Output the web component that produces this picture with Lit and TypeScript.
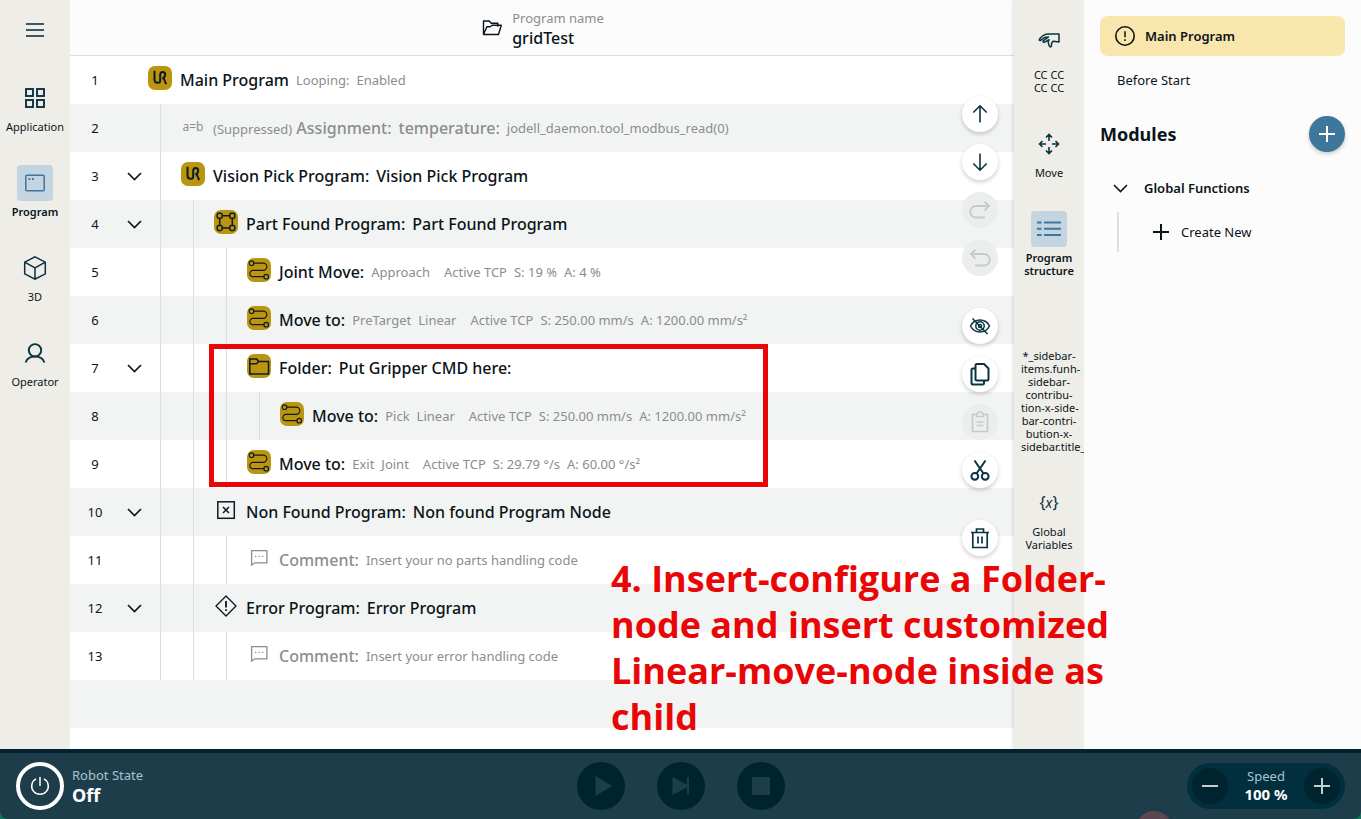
import { LitElement, html, svg, css, nothing } from "lit";
import { customElement, property } from "lit/decorators.js";
import { classMap } from "lit/directives/class-map.js";

const icons: Record<string, unknown> = {
  menu: svg`<path stroke-width="1.9" d="M3 6h18M3 12h18M3 18h18"/>`,
  apps: svg`<g stroke-width="1.9"><rect x="3" y="3" width="7" height="7"/><rect x="14" y="3" width="7" height="7"/><rect x="3" y="14" width="7" height="7"/><rect x="14" y="14" width="7" height="7"/></g>`,
  window: svg`<rect x="2.8" y="4.200" width="18.400" height="15.600" rx="1" stroke-width="1.500"/><path d="M5.500 8h1.800M9 8h1.800" stroke-width="1.800"/>`,
  cube: svg`<path stroke-width="1.500" d="M12 .8l10.300 5.400v11.600L12 23.200 1.700 17.800V6.200zM1.700 6.200L12 12l10.300-5.800M12 12v11.200"/>`,
  person: svg`<g stroke-width="1.900"><circle cx="12" cy="9.300" r="6.200"/><path d="M2.600 21.500c1.200-3.800 5-6 9.400-6s8.200 2.200 9.400 6"/></g>`,
  hand: svg`<path stroke-width="1.500" stroke-linejoin="round" d="M22 6H11.500C8 6 4.500 8.300 2.400 11.300c-.5.9.6 1.700 1.600.9L7.500 9.500l4-.5-5 3.600c-1.100.9.1 2.200 1.300 1.500l4.200-2.400c-1.300 1.800-1 3.300-.2 5l.7 1.600c.5 1.100 2 .6 1.900-.6-.2-2 .4-3.500 1.900-4.500L22 14z"/>`,
  move: svg`<path stroke-width="1.600" d="M12 9V3M9 5.500l3-3 3 3M12 15v6M9 18.500l3 3 3-3M9 12H3M5.500 9l-3 3 3 3M15 12h6M18.500 9l3 3-3 3"/>`,
  structure: svg`<path stroke-width="1.900" d="M0 5.500h4.500M7 5.500h17M0 11.800h4.500M7 11.800h17M0 18h4.500M7 18h17"/>`,
  chevron: svg`<path stroke-width="1.600" d="M6 9l6.500 6.500L19 9"/>`,
  up: svg`<path stroke-width="1.600" d="M12 20.500V4M5.300 10.500L12 3.800l6.700 6.700"/>`,
  down: svg`<path stroke-width="1.600" d="M12 3.500V20M5.300 13.500l6.700 6.700 6.700-6.700"/>`,
  redo: svg`<path stroke-width="1.900" d="M21 8H8a5.300 5.300 0 0 0 0 11.500h9M16.500 3.500L21 8l-4.500 4.500"/>`,
  undo: svg`<path stroke-width="1.900" d="M3 8h13a5.300 5.300 0 0 1 0 11.500H7M7.500 3.500L3 8l4.500 4.500"/>`,
  hide: svg`<path stroke-width="1.500" d="M2.500 12C4.500 8 8 6 12 6s7.500 2 9.500 6c-2 4-5.500 6-9.500 6s-7.500-2-9.500-6zM4.500 4.500l15 15.500"/><circle cx="12" cy="12" r="4.200" stroke-width="1.500"/><circle cx="12" cy="12" r="1.600" stroke-width="1.300"/>`,
  copy: svg`<path stroke-width="2" d="M9 2h7l4.500 4.500V17a1.500 1.500 0 0 1-1.500 1.500H9A1.500 1.500 0 0 1 7.500 17V3.500A1.500 1.500 0 0 1 9 2zM7.500 6.500H5A1.500 1.500 0 0 0 3.500 8v13A1.500 1.500 0 0 0 5 22.500h9.500A1.500 1.500 0 0 0 16 21v-2.500"/>`,
  paste: svg`<path stroke-width="1.700" d="M8 4.500H4.500v17h15v-17H16M8.500 6.500v-2c0-1 .8-1.500 1.700-1.500.3-1 1-1.500 1.800-1.500s1.500.5 1.800 1.500c.9 0 1.700.5 1.700 1.500v2zM8.500 12h7M8.500 15.500h7"/>`,
  cut: svg`<g stroke-width="2"><circle cx="6.800" cy="18.300" r="3.400"/><circle cx="17.200" cy="18.300" r="3.400"/><path d="M6.500 2.500L15.300 15.200M17.500 2.500L8.700 15.200"/></g>`,
  trash: svg`<path stroke-width="1.700" d="M3 6.500h18M4.800 6.500v15h14.400v-15M8.500 6V3h7v3M10 10.500v7M14 10.500v7"/>`,
  openFolder: svg`<path stroke-width="1.400" stroke-linejoin="round" d="M3.500 18.500V5h5.700l2 2.300h6.600v3.400M3.500 18.500l3.400-7.800h3.300l2-1.400h9.100L18.500 18.500z"/>`,
  alert: svg`<circle cx="12" cy="12" r="9.200" stroke-width="1.600"/><path d="M12 7.200v6M12 15.200v1.700" stroke-width="1.500"/>`,
  plus: svg`<path stroke-width="2" d="M12 4v16M4 12h16"/>`,
  minus: svg`<path stroke-width="2" d="M4 12h16"/>`,
  power: svg`<path stroke-width="1.500" d="M8 4.800a8.300 8.300 0 1 0 8 0M12 3v9"/>`,
  play: svg`<path fill="currentColor" stroke="none" d="M6.500 2v20L23 12z"/>`,
  step: svg`<path fill="currentColor" stroke="none" d="M3.500 3v18L18 13.300V21h2V3h-2v7.700z"/>`,
  stop: svg`<path fill="currentColor" stroke="none" d="M3 3h18v18H3z"/>`,
  variable: svg`<text x="12" y="17" text-anchor="middle" font-size="16" fill="currentColor" stroke="none">{<tspan font-style="italic" font-size="14">x</tspan>}</text>`,
  assign: svg`<text x="12" y="17" text-anchor="middle" font-size="12" fill="currentColor" stroke="none">a=b</text>`,
  logo: svg`<path stroke-width="2" d="M6.500 4.700v8.600q0 3.500 3 3.500h.7q2 0 2-2.300V8.800q0-2.800 2.500-2.800t2.500 2.700q0 2.700-2.700 3.400 1.800.4 2.400 2.900l1.200 3.200"/>`,
  part: svg`<g stroke-width="1.500"><rect x="3.200" y="3.300" width="5" height="5" rx="1.400"/><rect x="15.800" y="3.300" width="5" height="5" rx="1.400"/><rect x="3.200" y="15.500" width="5" height="5" rx="1.400"/><rect x="15.800" y="15.500" width="5" height="5" rx="1.400"/><path d="M8.200 5.800h7.600M8.200 18h7.600M5.700 8.300v7.200M18.300 8.300v7.200"/></g>`,
  route: svg`<g stroke-width="1.200"><circle cx="4.500" cy="5.200" r="2.300"/><circle cx="19.200" cy="18.700" r="2.300"/><path d="M6.800 5.200h9.400a3.600 3.600 0 0 1 0 7.200H6a3.150 3.150 0 0 0 0 6.300h10.900"/></g>`,
  folder: svg`<path stroke-width="1.500" d="M2.800 5h6.700l2.300 2.500h9.700V20H2.800zM2.800 9.800h6.500l2.500-2.300"/>`,
  missing: svg`<rect x="3.800" y="3.800" width="16.500" height="16.500" stroke-width="1.500"/><path d="M9 9l6 6M15 9l-6 6" stroke-width="1.500"/>`,
  comment: svg`<path stroke-width="1.300" d="M4.600 4.600h15.300v12.200H7.800L4.600 19zM8 10.300h1.300M11.500 10.300h1.300M15 10.300h1.300"/>`,
  error: svg`<path stroke-width="1.400" stroke-linejoin="round" d="M12 2l10 10-10 10L2 12z"/><path stroke-width="1.800" d="M12 7v6.500M12 15.200V17"/>`,
};

const icon = (name: string, size = 24) =>
  html`<svg width=${size} height=${size} viewBox="0 0 24 24" fill="none" stroke="currentColor" stroke-width="1.5" aria-hidden="true">${icons[name]}</svg>`;

const shared = css`
  * { box-sizing: border-box; }
  svg { display: block; flex: none; }
  button { margin: 0; padding: 0; border: 0; background: none; color: inherit; font: inherit; cursor: pointer; }
  button:disabled { cursor: default; }
`;

interface NavItem { icon: string; label: string; active?: boolean; top?: boolean }

@customElement("side-rail")
export class SideRail extends LitElement {
  @property({ attribute: false }) items: NavItem[] = [];

  static styles = [shared, css`
    :host { display: block; }
    nav { display: flex; flex-direction: column; align-items: center; gap: 32px; }
    .item { display: flex; flex-direction: column; align-items: center; gap: 4px; width: 56px; font-size: 11px; line-height: 13px; white-space: pre; }
    .box { display: flex; align-items: center; justify-content: center; width: 36px; height: 36px; border-radius: 4px; color: #0a3340; }
    .box.top { align-items: flex-start; }
    .active { font-weight: 600; }
    .active .box { background: #c3d5e1; color: #3f769c; }
    .label { display: block; width: 100%; text-align: center; }
    .item:not(.long) .label { display: flex; justify-content: center; }
  `];

  render() {
    return html`<nav>${this.items.map((i) => html`
      <button class=${classMap({ item: true, active: !!i.active, long: i.label.length > 40 })}>
        <span class=${classMap({ box: true, top: !!i.top })}>${i.icon ? icon(i.icon) : nothing}</span>
        <span class="label">${i.label}</span>
      </button>`)}</nav>`;
  }
}

interface ProgramNode {
  level: number; icon: string; titles: string[]; details?: string[][];
  open?: boolean; gold?: boolean; muted?: boolean; suppressed?: boolean;
}

const nodes: ProgramNode[] = [
  { level: 0, icon: "logo", gold: true, titles: ["Main Program"], details: [["Looping:", "Enabled"]] },
  { level: 1, icon: "assign", muted: true, suppressed: true, titles: ["Assignment:", "temperature:"], details: [["jodell_daemon.tool_modbus_read(0)"]] },
  { level: 1, icon: "logo", gold: true, open: true, titles: ["Vision Pick Program:", "Vision Pick Program"] },
  { level: 2, icon: "part", gold: true, open: true, titles: ["Part Found Program:", "Part Found Program"] },
  { level: 3, icon: "route", gold: true, titles: ["Joint Move:"], details: [["Approach"], ["Active TCP", "S: 19 %", "A: 4 %"]] },
  { level: 3, icon: "route", gold: true, titles: ["Move to:"], details: [["PreTarget", "Linear"], ["Active TCP", "S: 250.00 mm/s", "A: 1200.00 mm/s²"]] },
  { level: 3, icon: "folder", gold: true, open: true, titles: ["Folder:", "Put Gripper CMD here:"] },
  { level: 4, icon: "route", gold: true, titles: ["Move to:"], details: [["Pick", "Linear"], ["Active TCP", "S: 250.00 mm/s", "A: 1200.00 mm/s²"]] },
  { level: 3, icon: "route", gold: true, titles: ["Move to:"], details: [["Exit", "Joint"], ["Active TCP", "S: 29.79 °/s", "A: 60.00 °/s²"]] },
  { level: 2, icon: "missing", open: true, titles: ["Non Found Program:", "Non found Program Node"] },
  { level: 3, icon: "comment", muted: true, titles: ["Comment:"], details: [["Insert your no parts handling code"]] },
  { level: 2, icon: "error", open: true, titles: ["Error Program:", "Error Program"] },
  { level: 3, icon: "comment", muted: true, titles: ["Comment:"], details: [["Insert your error handling code"]] },
];

@customElement("program-tree")
export class ProgramTree extends LitElement {
  static styles = [shared, css`
    :host { display: block; }
    ol { list-style: none; margin: 0; padding: 0; }
    li { display: flex; align-items: center; height: 48px; white-space: nowrap; }
    li:nth-child(even) { background: #f2f4f3; }
    .num { width: 50px; text-align: center; font-size: 13px; }
    .toggle { display: flex; justify-content: center; width: 28px; }
    .guide { align-self: stretch; width: 33px; padding-left: 12px; }
    .guide::before { content: ""; display: block; height: 100%; width: 1px; background: #dcdfde; }
    .icon { margin: 0 8px 4px 0; border-radius: 7px; color: #0c1c24; }
    .gold { background: #bb9410; }
    .texts { display: flex; align-items: center; gap: 7px; }
    .title { font-size: 16px; font-weight: 500; }
    .group { display: flex; gap: 7px; margin-right: 7px; font-size: 13px; color: #8b8d8e; }
    .prefix { font-size: 13px; font-weight: 400; }
    .muted .icon, .muted .title { color: #8b8d8e; }
  `];

  render() {
    return html`<ol>
      ${nodes.map((n, i) => html`<li class=${classMap({ muted: !!n.muted })}>
        <span class="num">${i + 1}</span>
        <span class="toggle">${n.open ? html`<button aria-label="Collapse">${icon("chevron")}</button>` : nothing}</span>
        ${Array.from({ length: n.level }, () => html`<span class="guide"></span>`)}
        <span class=${classMap({ icon: true, gold: !!n.gold })}>${icon(n.icon)}</span>
        <span class="texts">
          ${n.titles.map((t, k) => html`<span class="title">${n.suppressed && k === 0 ? html`<span class="prefix">(Suppressed)</span> ` : nothing}${t}</span>`)}
          ${(n.details ?? []).map((g) => html`<span class="group">${g.map((d) => html`<span>${d}</span>`)}</span>`)}
        </span>
      </li>`)}
      <li></li>
    </ol>`;
  }
}

const tools = [
  [["up", "Move up"], ["down", "Move down"], ["redo", "Redo", "off"], ["undo", "Undo", "off"]],
  [["hide", "Suppress"], ["copy", "Copy"], ["paste", "Paste", "off"], ["cut", "Cut"]],
  [["trash", "Delete"]],
];

@customElement("app-root")
export class AppRoot extends LitElement {
  static styles = [shared, css`
    :host {
      display: flex; flex-direction: column; position: relative; min-height: 100vh; overflow: hidden;
      font-family: "Noto Sans", sans-serif; font-size: 13px; line-height: 20px; color: #0a1419; background: #17705a;
    }
    .body { flex: 1; display: grid; grid-template-columns: 70px minmax(0, 1fr) 70px 277px; background: #fff; }
    .left, .rail { background: #eeede8; }
    .left { display: flex; flex-direction: column; gap: 38px; padding-top: 18px; }
    .menu { align-self: center; color: #3a5964; }
    .rail { padding-top: 28px; overflow: hidden; }
    .rail-wrap { display: grid; box-shadow: 0 0 4px #0003; clip-path: inset(0 0 0 -6px); }
    header { display: flex; align-items: center; justify-content: center; gap: 8px; height: 56px; border-bottom: 1px solid #dcdfde; background: #fcfcfc; }
    .name { font-size: 16px; font-weight: 500; }
    .soft { color: #8b8d8e; }
    .work { position: relative; }
    .tools { position: absolute; top: 40px; right: 16px; display: flex; flex-direction: column; gap: 32px; }
    .tools div { display: flex; flex-direction: column; gap: 12px; }
    .round { display: flex; align-items: center; justify-content: center; width: 36px; height: 36px; border-radius: 50%; background: #fff; color: #0a3340; box-shadow: 0 2px 4px #0003; }
    .round:disabled { background: #eceeed; color: #c6cac9; box-shadow: none; }
    .panel { padding: 16px; background: #fcfcfc; }
    .main-program { display: flex; align-items: center; gap: 8px; width: 100%; height: 40px; padding: 0 13px; border-radius: 8px; background: #f8e6ac; font-weight: 600; }
    .before { display: flex; align-items: center; width: 100%; height: 48px; padding: 0 17px; }
    .modules { display: flex; align-items: center; justify-content: space-between; height: 60px; }
    h2 { margin: 0; font-size: 18px; line-height: 24px; font-weight: 700; }
    .round.add { background: #3f769c; color: #fff; }
    .fn { display: flex; align-items: center; gap: 12px; height: 48px; padding: 0 8px; font-weight: 600; }
    .create { display: flex; align-items: center; gap: 8px; height: 40px; margin-left: 17px; padding-left: 30px; border-left: 2px solid #dcdfde; }
    footer { position: relative; display: grid; grid-template-columns: 1fr auto 1fr; align-items: center; height: 70px; padding: 0 16px; border-top: 4px solid #00242f; border-radius: 0 0 8px 8px; background: #1e3d4b; color: #fff; overflow: hidden; }
    .state { display: flex; align-items: center; gap: 8px; }
    .readout { padding-bottom: 3px; }
    .power { display: flex; align-items: center; justify-content: center; width: 48px; height: 48px; border: 4px solid #fff; border-radius: 50%; }
    .caption { color: #a9c3d0; }
    .value { font-weight: 700; }
    .big { font-size: 18px; }
    .controls { display: flex; gap: 32px; }
    .controls button { display: flex; align-items: center; justify-content: center; width: 48px; height: 48px; border-radius: 50%; background: #00242f; color: #1e3d4b; }
    .speed { justify-self: end; display: flex; align-items: center; justify-content: space-between; width: 158px; height: 46px; padding: 0 5px; border-radius: 23px; background: #012f3d; text-align: center; line-height: 18px; }
    .speed .round { background: #00242f; color: #c8cdcc; box-shadow: none; }
    .speed .value { font-size: 15px; }
    .touch { position: absolute; right: 189px; bottom: -28px; width: 36px; height: 36px; border-radius: 50%; background: #5b4651; }
    .frame { position: absolute; left: 139px; top: 288px; width: 559px; height: 143px; border: 5px solid #e90606; pointer-events: none; }
    .note { position: absolute; left: 541px; top: 500px; z-index: 2; margin: 0; font-family: "Open Sans", "Noto Sans", sans-serif; font-size: 36px; font-weight: 700; line-height: 46px; color: #e90606; white-space: pre; pointer-events: none; }
  `];

  private leftItems: NavItem[] = [
    { icon: "apps", label: "Application" },
    { icon: "window", label: "Program", active: true },
    { icon: "cube", label: "3D" },
    { icon: "person", label: "Operator" },
  ];

  private rightItems: NavItem[] = [
    { icon: "hand", label: "CC CC\nCC CC", top: true },
    { icon: "move", label: "Move" },
    { icon: "structure", label: "Program\nstructure", active: true },
    { icon: "", label: "*_sidebar-\nitems.funh-\nsidebar-\ncontribu-\ntion-x-side-\nbar-contri-\nbution-x-\nsidebar.title_*" },
    { icon: "variable", label: "Global\nVariables" },
  ];

  render() {
    return html`
      <div class="body">
        <aside class="left">
          <button class="menu" aria-label="Menu">${icon("menu")}</button>
          <side-rail .items=${this.leftItems}></side-rail>
        </aside>
        <main>
          <header>
            ${icon("openFolder")}
            <div><div class="soft">Program name</div><div class="name">gridTest</div></div>
          </header>
          <div class="work">
            <program-tree></program-tree>
            <div class="tools">
              ${tools.map((g) => html`<div>${g.map(([i, label, off]) => html`<button class="round" aria-label=${label} ?disabled=${!!off}>${icon(i)}</button>`)}</div>`)}
            </div>
            <div class="frame"></div>
            <p class="note">4. Insert-configure a Folder-\nnode and insert customized\nLinear-move-node inside as\nchild</p>
          </div>
        </main>
        <div class="rail-wrap"><aside class="rail"><side-rail .items=${this.rightItems}></side-rail></aside></div>
        <section class="panel">
          <button class="main-program">${icon("alert")}Main Program</button>
          <button class="before">Before Start</button>
          <div class="modules"><h2>Modules</h2><button class="round add" aria-label="Add module">${icon("plus")}</button></div>
          <button class="fn">${icon("chevron")}Global Functions</button>
          <button class="create">${icon("plus")}Create New</button>
        </section>
      </div>
      <footer>
        <div class="state">
          <button class="power" aria-label="Power">${icon("power")}</button>
          <div class="readout"><div class="caption">Robot State</div><div class="value big">Off</div></div>
        </div>
        <div class="controls">
          <button disabled aria-label="Play">${icon("play")}</button>
          <button disabled aria-label="Step">${icon("step")}</button>
          <button disabled aria-label="Stop">${icon("stop")}</button>
        </div>
        <div class="speed">
          <button class="round" aria-label="Slower">${icon("minus")}</button>
          <div class="readout"><div class="caption">Speed</div><div class="value">100 %</div></div>
          <button class="round" aria-label="Faster">${icon("plus")}</button>
        </div>
        <span class="touch"></span>
      </footer>`;
  }
}
